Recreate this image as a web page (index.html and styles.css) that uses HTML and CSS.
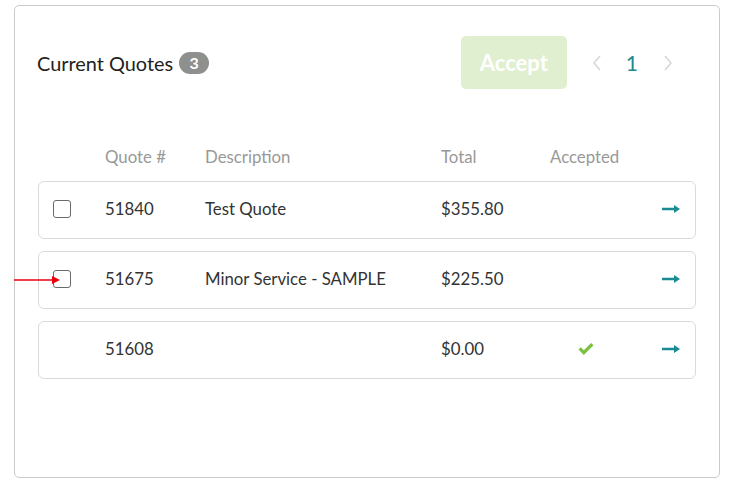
FILE: index.html
```html
<!DOCTYPE html>
<html>
<head>
<meta charset="utf-8">
<link rel="stylesheet" href="styles.css">
</head>
<body>
<div class="card">
  <div class="topbar">
    <div class="title">Current Quotes <span class="badge">3</span></div>
    <div class="actions">
      <button class="accept">Accept</button>
      <div class="pager">
        <svg class="chev" width="10" height="16" viewBox="0 0 10 16"><path d="M8 1 L2 8 L8 15" fill="none" stroke="#d6d8d6" stroke-width="1.6"/></svg>
        <span class="page">1</span>
        <svg class="chev" width="10" height="16" viewBox="0 0 10 16"><path d="M2 1 L8 8 L2 15" fill="none" stroke="#d6d8d6" stroke-width="1.6"/></svg>
      </div>
    </div>
  </div>
  <div class="thead grid">
    <span></span><span>Quote #</span><span>Description</span><span>Total</span><span>Accepted</span><span></span>
  </div>
  <div class="rows">
    <div class="row grid">
      <span class="cb"></span><span>51840</span><span>Test Quote</span><span>$355.80</span><span></span>
      <svg class="go" width="18" height="10" viewBox="0 0 18 10"><path d="M0 3.8h12V1l6 4-6 4V6.2H0z" fill="#1b8a93"/></svg>
    </div>
    <div class="row grid">
      <span class="cb"></span><span>51675</span><span>Minor Service - SAMPLE</span><span>$225.50</span><span></span>
      <svg class="go" width="18" height="10" viewBox="0 0 18 10"><path d="M0 3.8h12V1l6 4-6 4V6.2H0z" fill="#1b8a93"/></svg>
    </div>
    <div class="row grid">
      <span></span><span>51608</span><span></span><span>$0.00</span>
      <span class="acc"><svg width="16" height="12" viewBox="0 0 16 12"><path d="M0.5 6.5 L2.8 4.2 L5.8 7.2 L13.2 0 L15.5 2.3 L5.8 12 Z" fill="#7cc142"/></svg></span>
      <svg class="go" width="18" height="10" viewBox="0 0 18 10"><path d="M0 3.8h12V1l6 4-6 4V6.2H0z" fill="#1b8a93"/></svg>
    </div>
  </div>
</div>
<svg class="pointer" width="50" height="12" viewBox="0 0 50 12"><path d="M0 6 H40" stroke="#e8000b" stroke-width="1.6"/><path d="M38 2 L46 6 L38 10 Z" fill="#e8000b"/></svg>
</body>
</html>
```

FILE: styles.css
```css
html, body {
  margin: 0;
  padding: 0;
  background: #fff;
}
body {
  font-family: Lato, "Open Sans", sans-serif;
  color: #333;
  position: relative;
  width: 731px;
  height: 483px;
  overflow: hidden;
}
.card {
  margin: 5px 0 0 14px;
  width: 706px;
  height: 473px;
  box-sizing: border-box;
  border: 1px solid #c9cbc9;
  border-radius: 5px;
  padding: 30px 23px 0 23px;
}
.topbar {
  display: flex;
  align-items: center;
  justify-content: space-between;
  height: 53px;
}
.title {
  font-size: 19.9px;
  color: #222;
  display: flex;
  align-items: center;
  gap: 6px;
  margin-left: -1px;
}
.badge {
  display: inline-flex;
  align-items: center;
  justify-content: center;
  width: 30px;
  height: 22px;
  border-radius: 11px;
  background: #8d908d;
  color: #fff;
  font-weight: 700;
  font-size: 16px;
}
.actions {
  display: flex;
  align-items: center;
}
.accept {
  width: 106px;
  height: 53px;
  border: none;
  border-radius: 5px;
  background: #dfefcf;
  color: #fff;
  font-family: Lato, sans-serif;
  font-weight: 700;
  font-size: 22px;
  padding: 0;
}
.pager {
  display: flex;
  align-items: center;
  margin-left: 25px;
  margin-right: 23px;
}
.page {
  color: #1b8a93;
  font-size: 21px;
  margin: 0 25px 0 24px;
}
.grid {
  display: grid;
  grid-template-columns: 52px 100px 236px 109px 70px 1fr;
  align-items: center;
  padding-left: 14px;
  padding-right: 15px;
}
.thead {
  margin-top: 57px;
  height: 20px;
  color: #999;
  font-size: 16.8px;
  padding-left: 15px;
}
.rows {
  margin-top: 15px;
  display: flex;
  flex-direction: column;
  gap: 12px;
}
.row {
  height: 58px;
  box-sizing: border-box;
  border: 1px solid #d9dbd9;
  border-radius: 6px;
  font-size: 16.8px;
  color: #333;
  padding-bottom: 3px;
}
.cb {
  width: 16px;
  height: 16px;
  border: 1.5px solid #6a6a6a;
  border-radius: 3px;
}
.acc {
  display: flex;
  justify-content: center;
  padding-left: 2px;
}
.go {
  justify-self: end;
}
.pointer {
  position: absolute;
  left: 14px;
  top: 274px;
}
```
